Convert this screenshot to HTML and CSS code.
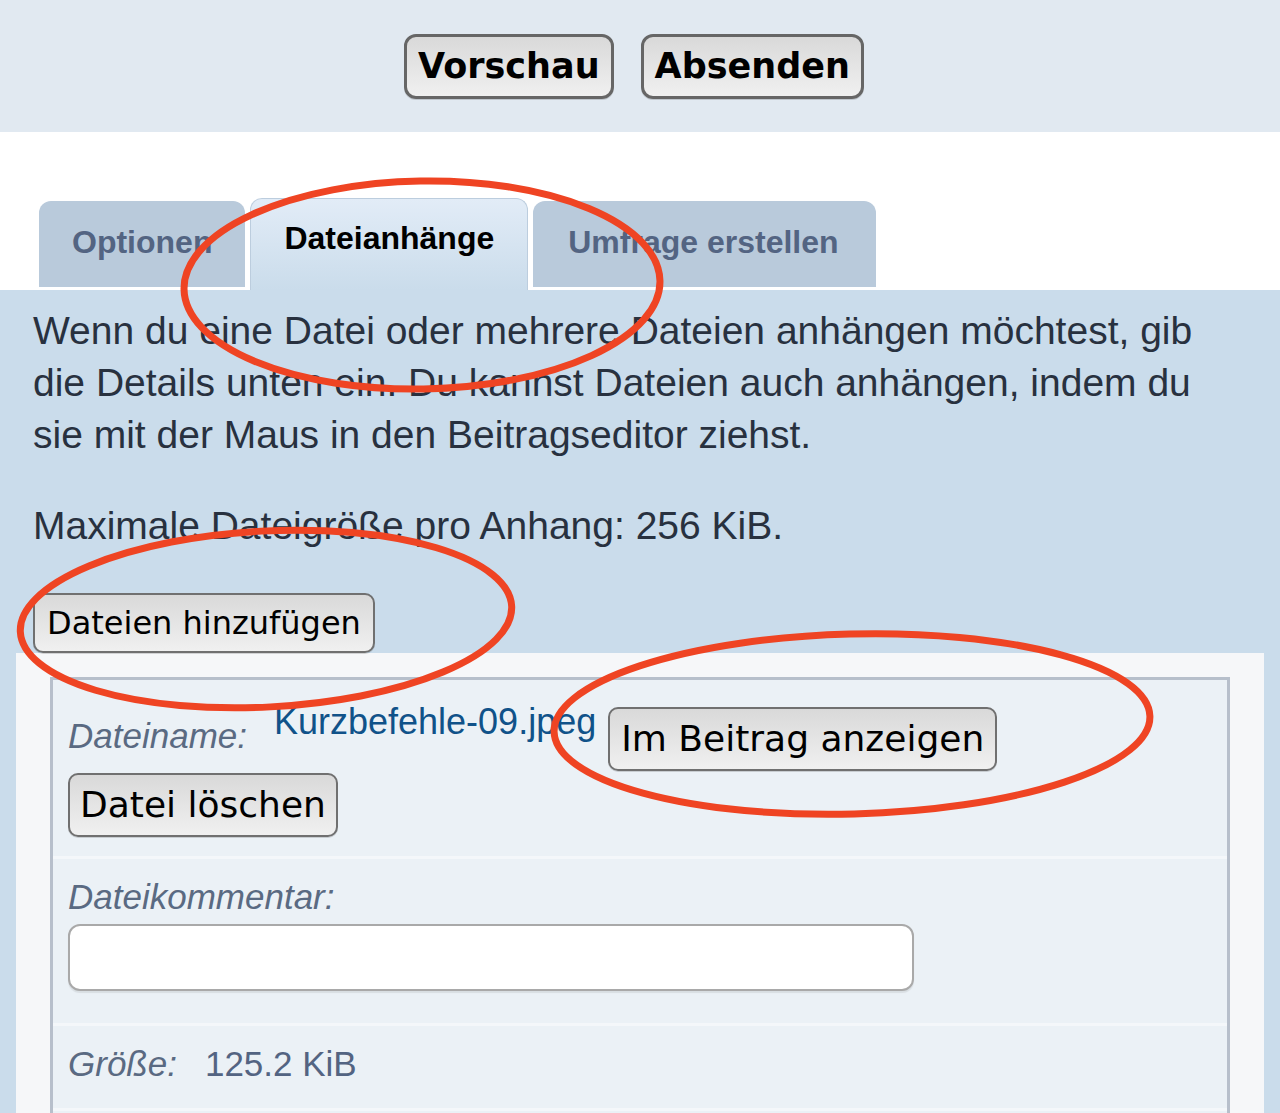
FILE: index.html
```html
<!DOCTYPE html>
<html lang="de">
<head>
<meta charset="utf-8">
<title>Dateianhänge</title>
<link rel="stylesheet" href="styles.css">
</head>
<body>
<div class="page">
  <div class="submit-bar">
    <button class="btn btn-big" type="button">Vorschau</button>
    <button class="btn btn-big" type="button">Absenden</button>
  </div>

  <div class="tabs">
    <div class="tab">Optionen</div>
    <div class="tab active">Dateianhänge</div>
    <div class="tab tab-wide">Umfrage erstellen</div>
  </div>

  <div class="panel">
    <p class="intro">Wenn du eine Datei oder mehrere Dateien anhängen möchtest, gib die Details unten ein. Du kannst Dateien auch anhängen, indem du sie mit der Maus in den Beitragseditor ziehst.</p>
    <p class="intro intro-2">Maximale Dateigröße pro Anhang: 256 KiB.</p>
    <div class="add-row"><button class="btn btn-add" type="button">Dateien hinzufügen</button></div>

    <div class="files">
      <div class="file-box">
        <div class="row row-name">
          <div class="name-line">
            <span class="label lbl-name">Dateiname:</span>
            <a class="file-link" href="#">Kurzbefehle-09.jpeg</a>
            <button class="btn btn-mid btn-place" type="button">Im Beitrag anzeigen</button>
          </div>
          <button class="btn btn-mid btn-delete" type="button">Datei löschen</button>
        </div>
        <div class="row row-comment">
          <div class="label">Dateikommentar:</div>
          <input class="comment-input" type="text">
        </div>
        <div class="row row-size">
          <span class="label">Größe:</span>
          <span class="size-value">125.2 KiB</span>
        </div>
        <div class="row row-more"></div>
      </div>
    </div>
  </div>

  <svg class="marks" width="1280" height="1113" viewBox="0 0 1280 1113" aria-hidden="true">
    <ellipse cx="422" cy="285" rx="238" ry="104" transform="rotate(-1 422 285)"/>
    <ellipse cx="266" cy="619" rx="246" ry="88" transform="rotate(-3 266 619)"/>
    <ellipse cx="852" cy="724" rx="298" ry="90" transform="rotate(-1.5 852 724)"/>
  </svg>
</div>
</body>
</html>
```

FILE: styles.css
```css
* { box-sizing: border-box; }

html, body {
  margin: 0;
  padding: 0;
  background: #ffffff;
}

body {
  font-family: "Liberation Sans", Arial, sans-serif;
  width: 1280px;
}

.page {
  position: relative;
  min-height: 1113px;
  overflow: hidden;
  background: #ffffff;
}

/* ---------- buttons ---------- */
.btn {
  font-family: "DejaVu Sans", Verdana, sans-serif;
  color: #000;
  background: linear-gradient(#d9d9d9, #f0f0f0);
  border: 2px solid #707070;
  border-radius: 10px;
  margin: 0;
  white-space: nowrap;
  box-shadow: 0 1px 0 rgba(0, 0, 0, 0.15);
}

.btn-big {
  font-size: 35px;
  font-weight: bold;
  line-height: 41px;
  padding: 9px 11px;
  border-width: 3px;
  border-color: #666;
  border-radius: 12px;
}

.btn-add {
  font-size: 32px;
  line-height: 38px;
  padding: 9px 12px;
}

.btn-mid {
  font-size: 36px;
  line-height: 42px;
  padding: 9px 11px;
}

/* ---------- top submit bar ---------- */
.submit-bar {
  height: 132px;
  background: #e1e9f1;
  display: flex;
  justify-content: center;
  align-items: center;
  gap: 27px;
  padding-right: 12px;
}

/* ---------- tabs ---------- */
.tabs {
  height: 158px;
  display: flex;
  align-items: flex-end;
  gap: 5px;
  padding-left: 39px;
  background: #fff;
}

.tab {
  height: 86px;
  margin-bottom: 3px;
  padding: 0 33px 4px;
  display: flex;
  align-items: center;
  background: #b9cadb;
  border-radius: 12px 12px 0 0;
  color: #536482;
  font-size: 32px;
  font-weight: bold;
}

.tab-wide {
  padding-left: 35px;
  padding-right: 37px;
}

.tab.active {
  height: 92px;
  margin-bottom: 0;
  padding-bottom: 12px;
  background: linear-gradient(#e2ecf7, #cadceb);
  border: 1px solid #bccdde;
  border-bottom: none;
  color: #000;
}

/* ---------- panel ---------- */
.panel {
  background: #cadceb;
  padding-top: 15px;
}

.intro {
  margin: 0;
  padding: 0 33px;
  font-size: 39px;
  line-height: 52px;
  color: #28313f;
}

.intro-2 {
  margin-top: 39px;
}

.add-row {
  margin-top: 41px;
  padding-left: 33px;
  display: flex;
}

.files {
  margin: 0 16px;
  background: #f6f7f9;
  padding: 24px 34px 0;
}

.file-box {
  border: 3px solid #b7bfcb;
  border-bottom: none;
  background: #ebf1f6;
}

.row {
  padding: 19px 15px 0;
  border-top: 3px solid #f4f7fa;
}

.row:first-child {
  border-top: none;
}

.label {
  font-style: italic;
  font-size: 35px;
  line-height: 38px;
  color: #5a6a82;
}

/* row 1 */
.row-name {
  padding-top: 23px;
  padding-bottom: 19px;
}

.name-line {
  display: flex;
  align-items: flex-start;
}

.lbl-name {
  margin-top: 14px;
}

.file-link {
  margin-left: 27px;
  font-size: 36px;
  line-height: 38px;
  color: #105289;
  text-decoration: none;
}

.btn-place {
  margin-top: 4px;
  margin-left: 12px;
}

.btn-delete {
  display: block;
  margin-top: 2px;
  padding-left: 10px;
  padding-right: 10px;
}

/* row 2 */
.row-comment {
  padding-bottom: 32px;
}

.comment-input {
  display: block;
  margin-top: 8px;
  width: 846px;
  height: 67px;
  background: #fff;
  border: 2px solid #a9a9a9;
  border-radius: 12px;
  box-shadow: 0 2px 1px rgba(0, 0, 0, 0.08);
  font-size: 32px;
  padding: 0 12px;
}

/* row 3 */
.row-size {
  display: flex;
  gap: 28px;
  padding-bottom: 25px;
}

.size-value {
  font-size: 35px;
  line-height: 38px;
  color: #536482;
}

.row-more {
  height: 60px;
}

/* ---------- annotation marks ---------- */
.marks {
  position: absolute;
  top: 0;
  left: 0;
  pointer-events: none;
}

.marks ellipse {
  fill: none;
  stroke: #ef4423;
  stroke-width: 7;
}
```
